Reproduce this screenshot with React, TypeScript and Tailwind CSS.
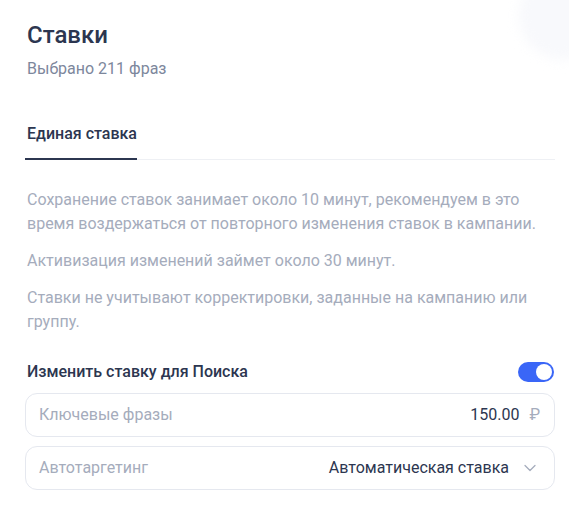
import React, { useState } from 'react';
import { ChevronDown } from 'lucide-react';

export default function App() {
  const [enabled, setEnabled] = useState(true);

  return (
    <div className="relative w-[569px] h-[506px] bg-white font-['Roboto',sans-serif] overflow-hidden">
      {/* faint close-button halo */}
      <div className="absolute -top-[30px] -right-[40px] w-[90px] h-[90px] rounded-full bg-[#f8f9fc] blur-[6px]" />

      <div className="relative pl-[27px] pt-[20px] pr-[14px]">
        {/* Header */}
        <h1 className="text-[24px] leading-[30px] font-medium text-[#2c3650]">Ставки</h1>
        <p className="mt-[8px] text-[16px] leading-[22px] text-[#7d879c]">Выбрано 211 фраз</p>

        {/* Tabs */}
        <div className="mt-[43px] flex border-b border-[#eef0f4] -ml-[2px]">
          <div className="pl-[2px] pb-[13px] border-b-2 border-[#2c3650] -mb-px text-[16px] leading-[22px] font-medium text-[#2c3650]">
            Единая ставка
          </div>
        </div>

        {/* Notes */}
        <div className="mt-[28px] space-y-[13px] text-[16px] leading-[24px] text-[#a5acbc]">
          <p>
            Сохранение ставок занимает около 10 минут, рекомендуем в это время воздержаться от повторного изменения ставок в кампании.
          </p>
          <p>Активизация изменений займет около 30 минут.</p>
          <p>Ставки не учитывают корректировки, заданные на кампанию или группу.</p>
        </div>

        {/* Search bid */}
        <div className="mt-[27px] flex items-center justify-between">
          <span className="text-[16px] leading-[22px] font-medium text-[#2c3650]">Изменить ставку для Поиска</span>
          <button
            onClick={() => setEnabled(!enabled)}
            className="mr-[1px] w-[36px] h-[20px] rounded-full bg-[#3a66f7] flex items-center justify-end px-[2px]"
          >
            <span className="w-[16px] h-[16px] rounded-full bg-white" />
          </button>
        </div>

        <div className="mt-[10px] space-y-[9px] -ml-[2px]">
          <div className="h-[44px] rounded-[12px] border border-[#e5e8ef] flex items-center pl-[13px] pr-[14px] text-[16px]">
            <span className="flex-1 text-[#a5acbc]">Ключевые фразы</span>
            <span className="text-[#2c3650]">150.00</span>
            <span className="ml-[10px] text-[#a5acbc]">₽</span>
          </div>
          <div className="h-[44px] rounded-[12px] border border-[#e5e8ef] flex items-center pl-[13px] pr-[14px] text-[16px]">
            <span className="flex-1 text-[#a5acbc]">Автотаргетинг</span>
            <span className="text-[#2c3650]">Автоматическая ставка</span>
            <ChevronDown className="ml-[11px] w-[20px] h-[20px] text-[#a5acbc]" strokeWidth={1.5} />
          </div>
        </div>
      </div>
    </div>
  );
}
